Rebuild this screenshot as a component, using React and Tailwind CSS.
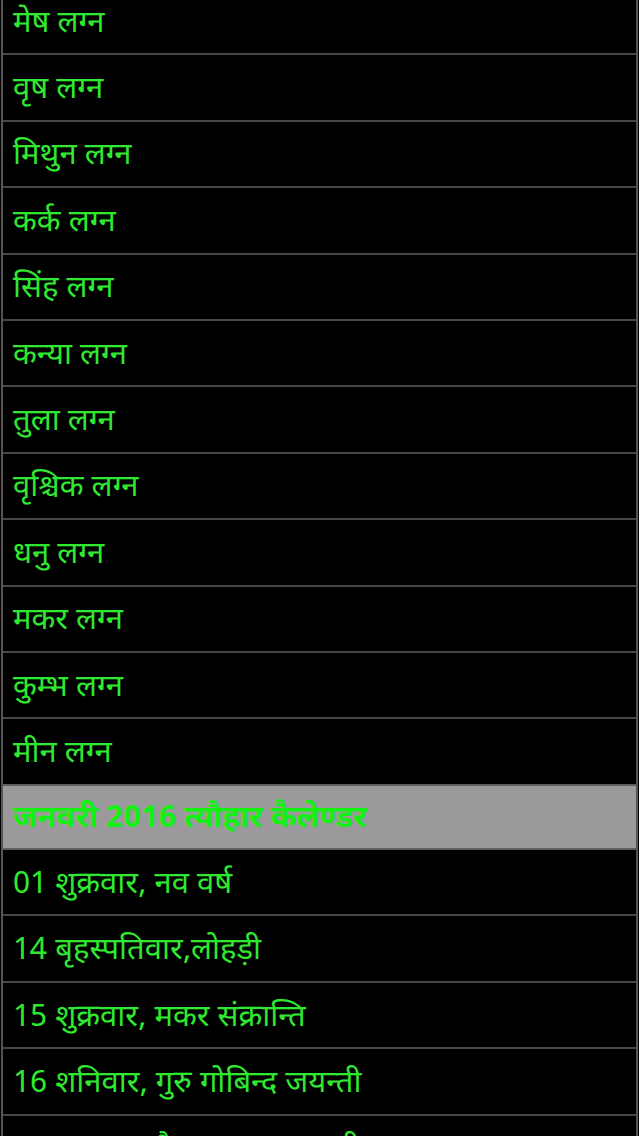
import React from "react";

const lagna = [
  "मेष लग्न",
  "वृष लग्न",
  "मिथुन लग्न",
  "कर्क लग्न",
  "सिंह लग्न",
  "कन्या लग्न",
  "तुला लग्न",
  "वृश्चिक लग्न",
  "धनु लग्न",
  "मकर लग्न",
  "कुम्भ लग्न",
  "मीन लग्न",
];

const festivals = [
  "01 शुक्रवार, नव वर्ष",
  "14 बृहस्पतिवार,लोहड़ी",
  "15 शुक्रवार, मकर संक्रान्ति",
  "16 शनिवार, गुरु गोबिन्द जयन्ती",
  "20 बुधवार, पौष पुत्रदा एकादशी",
];

const font = { fontFamily: '"Noto Sans Devanagari", "Noto Sans", Roboto, "Liberation Sans", sans-serif' };

function Row({ text }) {
  return (
    <div className="h-[66.4px] shrink-0 flex items-center px-[10px] pt-[6px] border-b-2 border-[#474747]">
      <span className="text-[31px] leading-none text-[#30e830] whitespace-nowrap">{text}</span>
    </div>
  );
}

export default function App() {
  return (
    <div className="w-[639px] h-[1136px] bg-black overflow-hidden" style={font}>
      <div className="h-full mx-[1px] border-x-2 border-[#555] overflow-hidden">
        <div className="-mt-[11px] flex flex-col">
          {lagna.map((t) => <Row key={t} text={t} />)}
          <div className="h-[66.4px] shrink-0 flex items-center px-[10px] pt-[6px] bg-[#9b999b] border-y-2 border-[#5e5e5e] -mt-[2px]">
            <span className="text-[31px] leading-none font-bold text-[#14f014] whitespace-nowrap">जनवरी 2016 त्यौहार कैलेण्डर</span>
          </div>
          {festivals.map((t) => <Row key={t} text={t} />)}
        </div>
      </div>
    </div>
  );
}
